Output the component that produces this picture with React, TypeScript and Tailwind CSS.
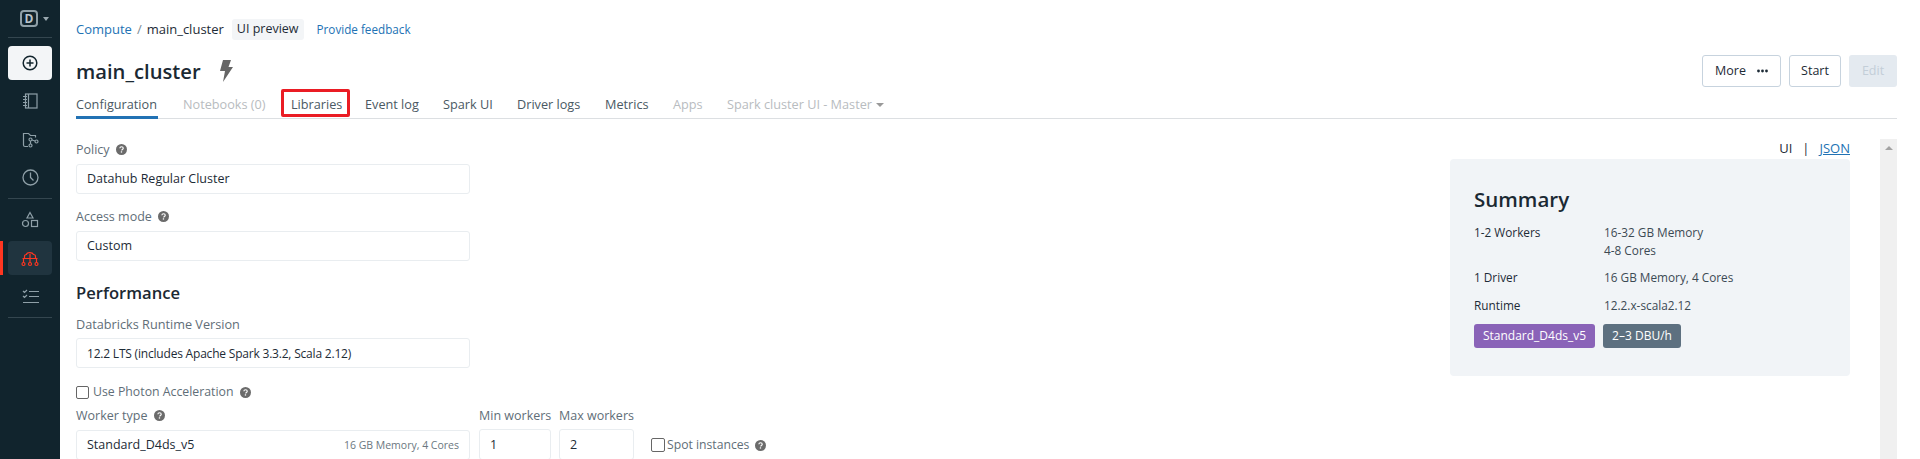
import type { ReactNode } from 'react';

function Help() {
  return (
    <svg viewBox="0 0 16 16" className="ml-1.5 inline-block h-[11px] w-[11px] shrink-0 align-[-1px]">
      <circle cx="8" cy="8" r="8" fill="#6b6b6b" />
      <path d="M5.6 6.2c.1-1.4 1.1-2.2 2.5-2.2s2.4.8 2.4 2c0 1-.6 1.5-1.3 2-.6.4-.8.7-.8 1.3" fill="none" stroke="#fff" strokeWidth="1.7" />
      <rect x="7" y="10.6" width="1.9" height="1.9" fill="#fff" />
    </svg>
  );
}

function NavIcon({ children, active, top }: { children: ReactNode; active?: boolean; top?: boolean }) {
  return (
    <div className={`relative mx-2 flex h-[34px] w-11 items-center justify-center rounded ${top ? 'bg-[#f3f5f7]' : active ? 'bg-[#20343f]' : ''}`}>
      {active && <span className="absolute -left-2 top-0 h-[34px] w-[3px] bg-[#ff3621]" />}
      {children}
    </div>
  );
}

function Sidebar() {
  const c = '#8fa0a8';
  return (
    <aside className="flex h-[459px] w-[60px] shrink-0 flex-col bg-[#11242d]">
      <div className="flex h-[37px] items-center pl-5">
        <div className="flex h-[17px] w-[18px] items-center justify-center rounded-[4px] border-2 border-[#8fa0a8] text-[12px] font-bold leading-none text-[#b8c4ca]">D</div>
        <div className="ml-[5px] h-0 w-0 border-x-[3.5px] border-t-[4px] border-x-transparent border-t-[#9aa8af]" />
      </div>
      <div className="mx-2 h-px bg-[#34464f]" />
      <div className="mt-2 flex flex-col gap-1">
        <NavIcon top>
          <svg width="16" height="16" viewBox="0 0 16 16" fill="none" stroke="#11242d" strokeWidth="1.5"><circle cx="8" cy="8" r="6.8" /><path d="M8 4.5v7M4.5 8h7" /></svg>
        </NavIcon>
        <NavIcon>
          <svg width="16" height="16" viewBox="0 0 16 16" fill="none" stroke={c} strokeWidth="1.2"><rect x="3.5" y="1" width="11.5" height="14" /><path d="M6.5 1v14M1 3.5h4M1 6.5h4M1 9.5h4M1 12.5h4" /></svg>
        </NavIcon>
        <NavIcon>
          <svg width="17" height="17" viewBox="0 0 17 17" fill="none" stroke={c} strokeWidth="1.2"><path d="M6 15.5H3c-1 0-1.5-.5-1.5-1.5V2.500h5l2 2h5v2" /><circle cx="8.5" cy="8.5" r="1.5" /><circle cx="8.5" cy="14.5" r="1.5" /><circle cx="14.5" cy="10.5" r="1.5" /><path d="M8.5 10v3M10 9l3 1" /></svg>
        </NavIcon>
        <NavIcon>
          <svg width="17" height="17" viewBox="0 0 17 17" fill="none" stroke={c} strokeWidth="1.3"><circle cx="8.5" cy="8.5" r="7.5" /><path d="M8.5 3.5v5l3 3" /></svg>
        </NavIcon>
      </div>
      <div className="mx-2 mt-1 h-px bg-[#34464f]" />
      <div className="mt-1 flex flex-col gap-1">
        <NavIcon>
          <svg width="18" height="18" viewBox="0 0 18 18" fill="none" stroke={c} strokeWidth="1.2"><path d="M9 1.500 12 7H6z" /><circle cx="4.500" cy="12.500" r="3" /><rect x="10.500" y="9.500" width="6" height="6" /></svg>
        </NavIcon>
        <NavIcon active>
          <svg width="18" height="18" viewBox="0 0 18 18" fill="none" stroke="#ff3621" strokeWidth="1.2"><path d="M3.500 9.500V7.500C3.500 6 4.500 5.500 5.500 5.500c.5-2.500 6-2.500 7 0 1 0 2 .5 2 2v2zM9 5v8.500M1.500 9.500h15M2.500 9.500v4M15.500 9.500v4" /><circle cx="2.500" cy="15" r="1.500" /><circle cx="9" cy="15" r="1.500" /><circle cx="15.500" cy="15" r="1.500" /></svg>
        </NavIcon>
        <NavIcon>
          <svg width="17" height="15" viewBox="0 0 17 15" fill="none" stroke={c} strokeWidth="1.2"><path d="m1 2 1.500 1.500L5 1M1 7l1.500 1.500L5 6M7 2.500h10M7 7.500h10M1 13.500h16" /></svg>
        </NavIcon>
      </div>
      <div className="mx-2 mt-1 h-px bg-[#34464f]" />
    </aside>
  );
}

function Field({ children, className }: { children: ReactNode; className?: string }) {
  return (
    <div className={`flex h-[30px] items-center rounded-[3px] border border-[#e9edf0] px-[10px] pt-px text-[12.5px] text-[#1d2b36] ${className ?? ''}`}>
      {children}
    </div>
  );
}

const tabs = [
  { label: 'Configuration', width: 'w-[82px]', active: true },
  { label: 'Notebooks (0)', width: 'w-[83px]', off: true },
  { label: 'Libraries', width: 'w-[49px]', boxed: true },
  { label: 'Event log', width: 'w-[53px]' },
  { label: 'Spark UI', width: 'w-[49px]' },
  { label: 'Driver logs', width: 'w-[63px]' },
  { label: 'Metrics', width: 'w-[43px]' },
  { label: 'Apps', width: 'w-[29px]', off: true },
  { label: 'Spark cluster UI - Master', width: 'w-[157px]', off: true, caret: true },
];

export default function App() {
  return (
    <div className="flex h-[459px] w-[1920px] overflow-hidden bg-white font-['Open_Sans','Noto_Sans',sans-serif] text-[13px] text-[#1d2b36]">
      <Sidebar />
      <main className="flex min-w-0 flex-1 flex-col pl-4 pr-[23px]">
        {/* Breadcrumb */}
        <div className="mt-5 flex h-[19px] items-center whitespace-nowrap">
          <span className="text-[#2272b4]">Compute</span>
          <span className="mx-[5px] text-[#7a8a94]">/</span>
          <span>main_cluster</span>
          <span className="ml-2 rounded-[3px] bg-[#f3f5f7] px-[5px] py-[1px] text-[12.5px]">UI preview</span>
          <span className="ml-[13px] text-[11.7px] font-medium text-[#2272b4]">Provide feedback</span>
        </div>

        {/* Title and actions */}
        <div className="mt-4 flex h-8 items-center justify-between">
          <div className="flex items-center">
            <h1 className="text-[20.2px] font-semibold leading-8 text-[#1b2933]">main_cluster</h1>
            <svg className="ml-[18px]" width="14" height="22" viewBox="0 0 14 22" fill="#666"><path d="M4 0h8L9.5 7H14L4 22l2-11H1z" /></svg>
          </div>
          <div className="flex gap-2 text-[12.5px]">
            <div className="flex h-8 w-[79px] items-center justify-center rounded-[3px] border border-[#c7d3de]">
              More
              <svg className="ml-[11px]" width="11" height="4" viewBox="0 0 11 4" fill="#1d2b36"><circle cx="1.500" cy="2" r="1.400" /><circle cx="5.500" cy="2" r="1.400" /><circle cx="9.500" cy="2" r="1.400" /></svg>
            </div>
            <div className="flex h-8 w-[52px] items-center justify-center rounded-[3px] border border-[#c7d3de]">Start</div>
            <div className="flex h-8 w-12 items-center justify-center rounded-[3px] bg-[#e4eaf0] text-[#c3ced8]">Edit</div>
          </div>
        </div>

        {/* Tabs */}
        <div className="mt-1.5 flex h-[26px] shrink-0 gap-[25px] border-b border-[#dcdfe2]">
          {tabs.map((t) => (
            <div key={t.label} className={`relative flex h-[26px] items-start whitespace-nowrap pt-0.5 text-[12.7px] leading-[18px] ${t.width} ${t.off ? 'text-[#b8bcc0]' : 'text-[#4a5963]'} ${t.active ? 'border-b-[3px] border-[#2272b4] font-medium text-[#2a3640]' : ''}`}>
              {t.label}
              {t.caret && <span className="ml-1 mt-2 h-0 w-0 border-x-[4px] border-t-[4px] border-x-transparent border-t-[#999]" />}
              {t.boxed && <span className="absolute -left-[10px] -right-[10px] -top-1 bottom-0.5 rounded-[2px] border-[3px] border-[#ea1c24]" />}
            </div>
          ))}
        </div>

        {/* Body */}
        <div className="flex min-h-0 flex-1">
          <div className="flex flex-1 items-start justify-between pr-[30px]">
            <div className="w-[700px] pt-[21px]">
              <div className="w-[394px]">
                <div className="h-5 text-[12.5px] leading-5 text-[#5f6e78]">Policy<Help /></div>
                <Field className="mt-1">Datahub Regular Cluster</Field>
                <div className="mt-[13px] h-5 text-[12.5px] leading-5 text-[#5f6e78]">Access mode<Help /></div>
                <Field className="mt-1">Custom</Field>
                <h2 className="mt-5 text-[16.6px] font-semibold leading-6 text-[#1b2933]">Performance</h2>
                <div className="mt-[9px] h-5 text-[12.7px] font-medium leading-5 text-[#5f6e78]">Databricks Runtime Version</div>
                <Field className="mt-1 text-[12px] tracking-[-0.2px]">12.2 LTS (includes Apache Spark 3.3.2, Scala 2.12)</Field>
                <div className="mt-[15px] flex h-[18px] items-center text-[12.3px] text-[#5f6e78]">
                  <span className="h-[13px] w-[13px] rounded-[2px] border border-[#666]" />
                  <span className="ml-1">Use Photon Acceleration</span>
                  <Help />
                </div>
              </div>
              <div className="mt-[5px] flex items-start text-[12.5px] font-medium text-[#5f6e78]">
                <div className="w-[394px] shrink-0">
                  <div className="h-5 font-normal leading-5">Worker type<Help /></div>
                  <div className="mt-1 flex h-[30px] items-center justify-between rounded-[3px] border border-[#e9edf0] px-[10px] pt-px font-normal">
                    <span className="text-[#1d2b36]">Standard_D4ds_v5</span>
                    <span className="text-[10.5px] text-[#6b7780]">16 GB Memory, 4 Cores</span>
                  </div>
                </div>
                <div className="ml-[9px] w-[72px] shrink-0">
                  <div className="h-5 whitespace-nowrap leading-5">Min workers</div>
                  <Field className="mt-[3px] h-[31px] px-[6px] font-normal">1</Field>
                </div>
                <div className="ml-2 w-[75px] shrink-0">
                  <div className="h-5 whitespace-nowrap leading-5">Max workers</div>
                  <Field className="mt-[3px] h-[31px] px-[7px] font-normal">2</Field>
                </div>
                <div className="ml-[17px] mt-6 flex h-[30px] items-center whitespace-nowrap text-[12.2px] font-normal">
                  <span className="h-[14px] w-[14px] rounded-[2px] border border-[#666]" />
                  <span className="ml-[2px]">Spot instances</span>
                  <Help />
                </div>
              </div>
            </div>

            {/* Summary */}
            <div className="w-[400px] pt-5">
              <div className="flex h-[18px] justify-end text-[13px] leading-[18px]">
                <span>UI</span><span className="mx-[10px]">|</span><span className="text-[#2272b4] underline">JSON</span>
              </div>
              <div className="mt-0.5 h-[217px] rounded-[4px] bg-[#f1f4f7] px-6 pt-[26px]">
                <h3 className="text-[20.5px] font-semibold leading-7 text-[#1b2933]">Summary</h3>
                <div className="mt-[10px] grid grid-cols-[130px_1fr] text-[11.8px] leading-[18px]">
                  <span>1-2 Workers</span><span className="text-[#3c4a54]">16-32 GB Memory<br />4-8 Cores</span>
                  <span className="mt-[9px]">1 Driver</span><span className="mt-[9px] text-[#3c4a54]">16 GB Memory, 4 Cores</span>
                  <span className="mt-[10px]">Runtime</span><span className="mt-[10px] text-[#3c4a54]">12.2.x-scala2.12</span>
                </div>
                <div className="mt-[10px] flex gap-2 text-[12px] text-white">
                  <span className="flex h-6 w-[121px] items-center justify-center rounded-[3px] bg-[#8a63b8]">Standard_D4ds_v5</span>
                  <span className="flex h-6 w-[78px] items-center justify-center rounded-[3px] bg-[#5d7080]">2–3 DBU/h</span>
                </div>
              </div>
            </div>
          </div>

          {/* Scrollbar */}
          <div className="mt-5 flex w-[17px] shrink-0 justify-center bg-[#f0f0f0] pt-[7px]">
            <span className="h-0 w-0 border-x-[4px] border-b-[4px] border-x-transparent border-b-[#a3a3a3]" />
          </div>
        </div>
      </main>
    </div>
  );
}
